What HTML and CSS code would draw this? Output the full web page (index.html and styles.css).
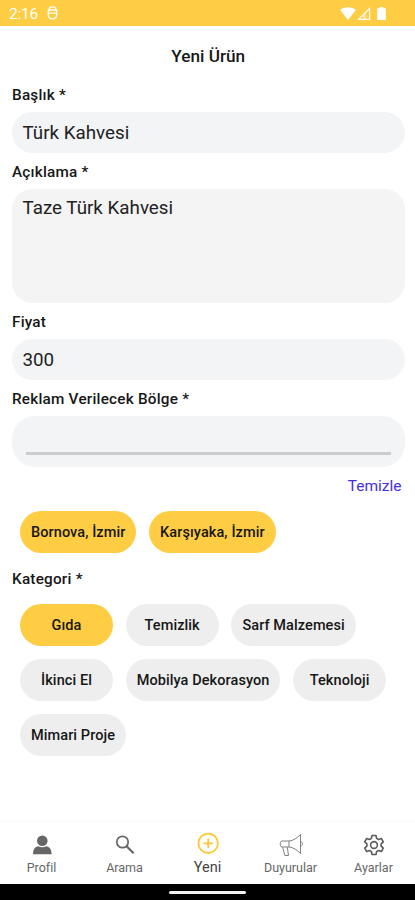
FILE: index.html
```html
<!DOCTYPE html>
<html lang="tr">
<head>
<meta charset="utf-8">
<title>Yeni Ürün</title>
<link rel="stylesheet" href="styles.css">
</head>
<body>
<div class="screen">
  <div class="status">
    <span class="time">2:16</span>
    <svg class="app-icon" width="11" height="14" viewBox="0 0 11 14" fill="none" stroke="#fff" stroke-width="1.3"><path d="M2 3.200L3.200 1.200h4.600L9 3.200M1.300 4v4.700c0 2.400 1.700 4.100 4.200 4.100s4.200-1.700 4.200-4.100V4zM1.300 7.200h8.400"/></svg>
    <svg class="signals" width="48" height="15" viewBox="0 0 48 15" fill="#fff"><path d="M0 3.800C4.500.4 11.500.4 16 3.800L8 14z"/><path d="M29.600 2.500V13.400H18.600z" fill="none" stroke="#fff" stroke-width="1.200"/><path d="M23 13V9l3-3v7z" opacity=".45"/><path d="M39.700 1h3.600v1.300h2.500V14h-8.600V2.300h2.500z"/></svg>
  </div>
  <main class="form">
    <h1>Yeni Ürün</h1>
    <div class="label">Başlık *</div>
    <div class="field">Türk Kahvesi</div>
    <div class="label">Açıklama *</div>
    <div class="field area">Taze Türk Kahvesi</div>
    <div class="label">Fiyat</div>
    <div class="field">300</div>
    <div class="label">Reklam Verilecek Bölge *</div>
    <div class="field region"><div class="line"></div></div>
    <div class="clear">Temizle</div>
    <div class="chips">
      <span class="chip on">Bornova, İzmir</span><span class="chip on">Karşıyaka, İzmir</span>
    </div>
    <div class="label category-label">Kategori *</div>
    <div class="chips">
      <span class="chip on">Gıda</span><span class="chip">Temizlik</span><span class="chip">Sarf Malzemesi</span>
      <span class="chip">İkinci El</span><span class="chip">Mobilya Dekorasyon</span><span class="chip">Teknoloji</span>
      <span class="chip">Mimari Proje</span>
    </div>
  </main>
  <nav class="tabs">
    <div class="tab"><svg width="26" height="26" viewBox="0 0 26 26" fill="#666"><circle cx="13.300" cy="9.800" r="5.300"/><path d="M4 23.200c.2-5.400 2.200-7.400 5.400-7.900 2.200 1.300 5.600 1.300 7.800 0 3.200.5 5.200 2.500 5.400 7.900z"/></svg><span>Profil</span></div>
    <div class="tab"><svg width="26" height="26" viewBox="0 0 26 26" fill="none" stroke="#666"><circle cx="10.500" cy="11" r="5.700" stroke-width="1.700"/><path d="M14.600 15.200l7 7" stroke-width="2.200"/></svg><span>Arama</span></div>
    <div class="tab active"><svg width="26" height="26" viewBox="0 0 26 26" fill="none" stroke="#ffc832" stroke-width="1.800"><circle cx="13.200" cy="12.300" r="9.700"/><path d="M13.200 7.600v9.400M8.500 12.300h9.400"/></svg><span>Yeni</span></div>
    <div class="tab"><svg width="26" height="26" viewBox="0 0 26 26" fill="none" stroke="#808080" stroke-width="1" stroke-linejoin="round"><path d="M3.500 10h7.500c4-.3 8-2.800 11.500-6.500v19c-3.500-3.800-7.500-6-11.500-6.500H3.500c-1.800-1.800-1.800-4.300 0-6zM11 10v6M4.500 16.200l2.400 8.300h3.600L9.300 16.200M22.500 10.500c2.700.4 2.700 4.200 0 4.600"/></svg><span>Duyurular</span></div>
    <div class="tab"><svg width="26" height="26" viewBox="0 0 26 26" fill="none" stroke="#5c5c5c" stroke-width="1.600" stroke-linejoin="round"><circle cx="13" cy="14" r="3.400"/><path d="M11 4.500h4l.6 2.900 1.900 1.100 2.800-1 2 3.400-2.200 2v2.200l2.200 2-2 3.400-2.800-1-1.900 1.100-.6 2.900h-4l-.6-2.900-1.900-1.100-2.800 1-2-3.400 2.200-2v-2.200l-2.200-2 2-3.400 2.800 1 1.900-1.100z"/></svg><span>Ayarlar</span></div>
  </nav>
  <div class="home"><div class="handle"></div></div>
</div>
</body>
</html>
```

FILE: styles.css
```css
* { box-sizing: border-box; }
body { margin: 0; background: #fff; color: #171717; font-family: Roboto, sans-serif; }
.screen { width: 415px; height: 900px; display: flex; flex-direction: column; overflow: hidden; }
.status { height: 25.500px; background: #ffcd43; display: flex; align-items: center; padding: 2px 32px 0 9px; color: #fff; flex: none; }
.time { font-size: 15.500px; letter-spacing: -.2px; }
.app-icon { margin-left: 8.500px; margin-top: -2px; }
.signals { margin-left: auto; margin-right: -5px; margin-top: -1px; }
.form { flex: 1; padding: 0 10.500px 0 12px; }
h1 { margin: 20.500px 0 17px; height: 20px; line-height: 20px; font-size: 17.200px; font-weight: 500; text-align: center; }
.label { height: 24px; margin-bottom: 5px; line-height: 24px; font-size: 15.300px; font-weight: 500; letter-spacing: .22px; }
.field { height: 41px; margin-bottom: 6.500px; padding-left: 10.500px; border-radius: 20.500px; background: #f2f4f6; font-size: 18.800px; line-height: 43px; color: #222; }
.area { height: 114.500px; margin-bottom: 7px; background: #f4f4f4; line-height: 38px; }
.region { height: 51.500px; margin: 0; padding: 36px 14px 0; border-radius: 23px; }
.line { height: 3px; background: #cacccd; }
.clear { height: 44px; padding: 7px 3px 0 0; line-height: 24px; text-align: right; font-size: 15.500px; color: #442ee0; }
.chips { display: flex; flex-wrap: wrap; gap: 13px 12.700px; padding-left: 8px; }
.chip { height: 42px; min-width: 93px; padding: 0 11px; border-radius: 21px; background: #eee; line-height: 43px; text-align: center; font-size: 14.500px; font-weight: 500; letter-spacing: .08px; white-space: nowrap; }
.on { background: #ffcd43; }
.category-label { margin: 14px 0 13px; }
.tabs { height: 61.500px; flex: none; display: grid; grid-template-columns: repeat(5, 83px); box-shadow: 0 -1px 1px #fafafa; }
.tab { display: flex; flex-direction: column; align-items: center; padding-top: 9px; font-size: 12.500px; line-height: 16px; color: #666; }
.tab span { margin-top: 3px; }
.active { font-size: 14.500px; color: #444; }
.home { height: 16.500px; flex: none; background: #000; display: flex; align-items: center; justify-content: center; padding-top: 1px; }
.handle { width: 77px; height: 3px; border-radius: 2px; background: #f4f4f4; }
```
